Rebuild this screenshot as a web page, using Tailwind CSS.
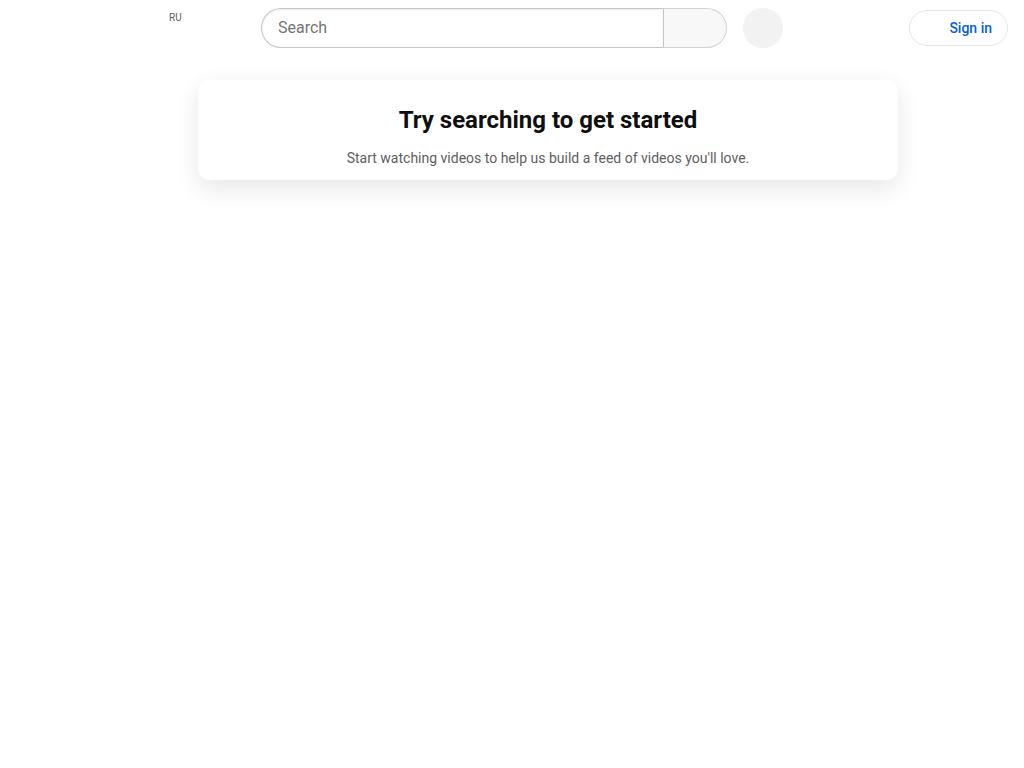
<!DOCTYPE html>
<html lang="en">
<head>
    <meta charset="UTF-8">
    <meta name="viewport" content="width=device-width, initial-scale=1.0">
    <title>YouTube</title>
    <script src="https://cdn.jsdelivr.net/npm/@tailwindcss/browser@4"></script>
</head>
<body class="min-h-screen bg-white font-['Roboto',Arial,sans-serif] text-[#0f0f0f]">
    <!-- Masthead -->
    <header class="flex h-14 items-center px-4">
        <!-- Country code beside the logo -->
        <div class="flex h-full w-[245px] shrink-0 items-start pt-3 pl-[153px]">
            <span class="text-[10px] leading-3 text-[#606060]">RU</span>
        </div>

        <!-- Search -->
        <div class="flex min-w-0 flex-1 items-center gap-4">
            <form class="flex h-10 min-w-0 flex-1" role="search">
                <input type="text" name="search_query" placeholder="Search" aria-label="Search" class="min-w-0 flex-1 rounded-l-full border border-r-0 border-[#c6c6c6] pr-1 pl-4 text-base leading-6 shadow-[inset_0_1px_2px_#eeeeee] outline-none placeholder:text-[#757575]">
                <button type="submit" aria-label="Search" class="w-16 shrink-0 rounded-r-full border border-[#d3d3d3] border-l-[#c6c6c6] bg-[#f8f8f8]"></button>
            </form>
            <button type="button" aria-label="Search with your voice" class="size-10 shrink-0 rounded-full bg-[#f2f2f2]"></button>
        </div>

        <!-- Account -->
        <div class="flex w-[225px] shrink-0 justify-end">
            <a href="#" class="flex h-9 items-center rounded-full border border-black/10 pr-[15px] pl-[39px] text-sm font-medium text-[#065fd4]">Sign in</a>
        </div>
    </header>

    <!-- Feed, to the right of the mini guide -->
    <main class="px-6 pt-6 pl-24">
        <section class="mx-auto max-w-[700px] rounded-xl bg-white px-6 pt-6 pb-3 text-center shadow-[0_8px_24px_rgba(0,0,0,0.1)]">
            <h1 class="text-2xl leading-8 font-bold">Try searching to get started</h1>
            <p class="mt-3 text-sm leading-5 text-[#606060]">Start watching videos to help us build a feed of videos you'll love.</p>
        </section>
    </main>
</body>
</html>
